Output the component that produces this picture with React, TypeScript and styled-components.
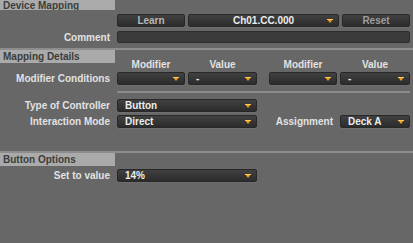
import {ReactNode} from "react";
import styled, {createGlobalStyle} from "styled-components";

const Global = createGlobalStyle`
    html, body { margin: 0; padding: 0; background: #666766; }
`

const Page = styled.div`
    width: 413px;
    height: 243px;
    overflow: hidden;
    background: #666766;
    font-family: "Liberation Sans", Arial, sans-serif;
    font-weight: bold;
    font-size: 10px;
    color: #e2e2e2;
`

const Divider = styled.div`
    height: 2px;
    background: #8c8d8c;
`

const SectionHeader = styled.div<{$h?: number}>`
    width: 115px;
    height: ${p => p.$h ?? 13}px;
    line-height: ${p => (p.$h ? 12 : 13)}px;
    padding-left: 3px;
    box-sizing: border-box;
    background: #a9aaa9;
    color: #3c3d3c;
    overflow: hidden;
    white-space: nowrap;
`

const Row = styled.div<{$top?: number}>`
    display: grid;
    grid-template-columns: 117px 1fr;
    align-items: center;
    padding-right: 3px;
    margin-top: ${p => p.$top ?? 0}px;
`

const Label = styled.div`
    text-align: right;
    padding-right: 7px;
    white-space: nowrap;
    color: #e2e2e2;
`

const Controls = styled.div<{$gap?: number}>`
    display: flex;
    align-items: center;
    gap: ${p => p.$gap ?? 3}px;
`

const Pair = styled.div<{$w: number}>`
    display: flex;
    gap: 3px;
    width: ${p => p.$w}px;
`

const ColTitle = styled.div<{$w: number}>`
    width: ${p => p.$w}px;
    text-align: center;
    line-height: 12px;
    color: #e2e2e2;
`

const Box = styled.div<{$w?: number; $h?: number}>`
    position: relative;
    box-sizing: border-box;
    width: ${p => (p.$w ? `${p.$w}px` : "auto")};
    flex: ${p => (p.$w ? "none" : "1")};
    height: ${p => p.$h ?? 13}px;
    background: linear-gradient(#404140, #2b2c2b);
    border: 1px solid #282828;
    border-radius: 2px;
    box-shadow: 0 1px 0 rgba(255, 255, 255, 0.06);
    line-height: 11px;
`

const ButtonBox = styled(Box)<{$dim?: boolean}>`
    text-align: center;
    color: ${p => (p.$dim ? "#9d9e9d" : "#b6b7b6")};
`

const SelectText = styled.div<{$center?: boolean}>`
    padding-left: ${p => (p.$center ? 0 : 7)}px;
    text-align: ${p => (p.$center ? "center" : "left")};
    color: #ededed;
    white-space: nowrap;
`

const Arrow = styled.svg`
    position: absolute;
    right: 5px;
    top: 4px;
`

const Field = styled.div`
    height: 12px;
    box-sizing: border-box;
    background: #3a3b3a;
    border: 1px solid #2c2d2c;
    border-radius: 2px;
`

const HeadRow = styled.div`
    display: grid;
    grid-template-columns: 117px 1fr;
    height: 21px;
    padding-right: 3px;
`

const Titles = styled.div`
    display: flex;
    align-self: end;
    gap: 12px;
`

const Line = styled.div`
    margin: 6px 3px 0 117px;
    height: 2px;
    background: #8a8b8a;
`

const Spacer = styled.div<{$h: number}>`
    height: ${p => p.$h}px;
`

const AssignLabel = styled(Label)`
    flex: 1;
`

const Select = ({w, value, center, h}: {w?: number; value?: ReactNode; center?: boolean; h?: number}) => (
    <Box $w={w} $h={h}>
        <SelectText $center={center}>{value}</SelectText>
        <Arrow width="6" height="4" viewBox="0 0 6 4">
            <polygon points="0,0 6,0 3,4" fill="#f29b1f"/>
            <rect x="0" y="0" width="6" height="1" fill="#ffc95a"/>
        </Arrow>
    </Box>
)

export default function App() {
    return (<>
        <Global/>
        <Page>
            <SectionHeader $h={10}>Device Mapping</SectionHeader>
            <Row $top={4}>
                <span/>
                <Controls>
                    <ButtonBox $w={68}>Learn</ButtonBox>
                    <Select w={151} value="Ch01.CC.000" center/>
                    <ButtonBox $w={68} $dim>Reset</ButtonBox>
                </Controls>
            </Row>
            <Row $top={4}>
                <Label>Comment</Label>
                <Field/>
            </Row>
            <Spacer $h={5}/>

            <Divider/>
            <HeadRow>
                <SectionHeader>Mapping Details</SectionHeader>
                <Titles>
                    <Pair $w={140}>
                        <ColTitle $w={68}>Modifier</ColTitle>
                        <ColTitle $w={69}>Value</ColTitle>
                    </Pair>
                    <Pair $w={141}>
                        <ColTitle $w={68}>Modifier</ColTitle>
                        <ColTitle $w={70}>Value</ColTitle>
                    </Pair>
                </Titles>
            </HeadRow>
            <Row $top={1}>
                <Label>Modifier Conditions</Label>
                <Controls $gap={12}>
                    <Pair $w={140}>
                        <Select w={68}/>
                        <Select w={69} value="-"/>
                    </Pair>
                    <Pair $w={141}>
                        <Select w={68}/>
                        <Select w={70} value="-"/>
                    </Pair>
                </Controls>
            </Row>
            <Line/>
            <Row $top={6}>
                <Label>Type of Controller</Label>
                <Controls>
                    <Select w={140} value="Button"/>
                </Controls>
            </Row>
            <Row $top={3}>
                <Label>Interaction Mode</Label>
                <Controls $gap={0}>
                    <Select w={140} value="Direct"/>
                    <AssignLabel>Assignment</AssignLabel>
                    <Select w={70} value="Deck A"/>
                </Controls>
            </Row>
            <Spacer $h={23}/>

            <Divider/>
            <SectionHeader>Button Options</SectionHeader>
            <Row $top={3}>
                <Label>Set to value</Label>
                <Controls>
                    <Select w={140} value="14%"/>
                </Controls>
            </Row>
        </Page>
    </>)
}
